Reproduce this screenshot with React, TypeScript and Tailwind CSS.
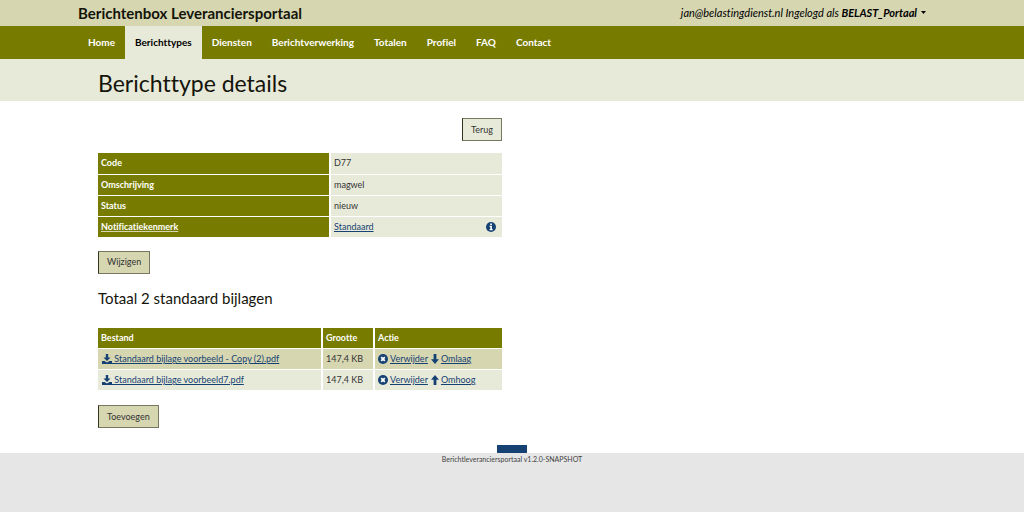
import React from "react";
import clsx from "clsx";

const navItems = [
  "Home",
  "Berichttypes",
  "Diensten",
  "Berichtverwerking",
  "Totalen",
  "Profiel",
  "FAQ",
  "Contact",
];

const details = [
  { label: "Code", value: "D77" },
  { label: "Omschrijving", value: "magwel" },
  { label: "Status", value: "nieuw" },
  { label: "Notificatiekenmerk", value: "Standaard", isLink: true },
];

const attachments = [
  { name: "Standaard bijlage voorbeeld - Copy (2).pdf", size: "147,4 KB", move: "Omlaag" },
  { name: "Standaard bijlage voorbeeld7.pdf", size: "147,4 KB", move: "Omhoog" },
];

function DownloadIcon() {
  return (
    <svg viewBox="0 0 10 10" className="h-2.5 w-2.5 shrink-0" fill="#154273" aria-hidden="true">
      <path d="M3.8 0h2.4v3.4h2.3L5 7 1.5 3.4h2.3z" />
      <path d="M0 7h2.6L5 8.6 7.4 7H10v3H0z" />
    </svg>
  );
}

function RemoveIcon() {
  return (
    <svg viewBox="0 0 10 10" className="h-2.5 w-2.5 shrink-0" aria-hidden="true">
      <circle cx="5" cy="5" r="5" fill="#154273" />
      <path d="M3.2 3.2l3.6 3.6M6.8 3.2L3.2 6.8" stroke="#fff" strokeWidth="1.8" />
    </svg>
  );
}

function InfoIcon() {
  return (
    <svg viewBox="0 0 10 10" className="h-2.5 w-2.5" aria-hidden="true">
      <circle cx="5" cy="5" r="5" fill="#154273" />
      <path d="M4.2 1.5h1.7v1.4H4.2zM3.6 3.8h2.3v3.3h.7v1.2H3.6V7.1h.7V5h-.7z" fill="#fff" />
    </svg>
  );
}

function ArrowIcon({ up }: { up: boolean }) {
  return (
    <svg viewBox="0 0 8 10" className="h-2.5 w-2 shrink-0" fill="#154273" aria-hidden="true">
      {up ? (
        <path d="M4 0L8 4.8H5.4V10H2.6V4.8H0z" />
      ) : (
        <path d="M4 10L0 5.2h2.6V0h2.8v5.2H8z" />
      )}
    </svg>
  );
}

function Button({ children, light }: { children: React.ReactNode; light?: boolean }) {
  return (
    <button
      type="button"
      className={clsx(
        "h-[23px] border border-[#77785f] border-l-[#33341f] px-2 text-[9px] text-[#333]",
        light ? "bg-[#e8ead9]" : "bg-[#d6d6b1]"
      )}
    >
      {children}
    </button>
  );
}

export default function App() {
  return (
    <div className="flex min-h-screen flex-col bg-white font-['Lato','Noto_Sans',sans-serif] text-[9px] leading-4 text-black [font-variant-ligatures:none]">
      <header className="bg-[#d6d6b1]">
        <div className="mx-auto flex h-[26px] max-w-[868px] items-center justify-between pr-5 pb-px">
          <span className="text-[15px] font-bold text-[#14140a]">Berichtenbox Leveranciersportaal</span>
          <button type="button" className="flex items-center gap-1 text-[11px] italic">
            <span>
              jan@belastingdienst.nl Ingelogd als <b>BELAST_Portaal</b>
            </span>
            <svg viewBox="0 0 5 3" className="h-[3px] w-[5px]" aria-hidden="true">
              <path d="M0 0h5L2.5 3z" />
            </svg>
          </button>
        </div>
      </header>

      <nav className="bg-[#777c00]">
        <ul className="mx-auto flex max-w-[868px]">
          {navItems.map((item) => (
            <li key={item}>
              <a
                href="#"
                className={clsx(
                  "block px-2.5 text-[10px] leading-[33px] font-bold",
                  item === "Berichttypes" ? "bg-[#e8ead9] text-black" : "text-white"
                )}
              >
                {item}
              </a>
            </li>
          ))}
        </ul>
      </nav>

      <div className="bg-[#e8ead9]">
        <div className="mx-auto max-w-[868px] px-5">
          <h1 className="pt-[9px] pb-[3px] text-[23px] leading-[30px] text-[#14140a]">Berichttype details</h1>
        </div>
      </div>

      <main className="mx-auto w-full max-w-[868px] px-5">
        <div className="max-w-[404px] pt-[17px]">
          <div className="flex justify-end">
            <Button light>Terug</Button>
          </div>

          <table className="mt-3 w-full table-fixed border-collapse">
            <tbody>
              {details.map((row) => (
                <tr key={row.label} className="h-[21px] border-b border-white">
                  <th
                    scope="row"
                    className="w-[232px] border-r-2 border-white bg-[#777c00] px-[3px] text-left font-bold text-white"
                  >
                    <span className={clsx(row.isLink && "underline decoration-[#d6d6b1]")}>{row.label}</span>
                  </th>
                  <td className="bg-[#e8ead9] pr-1.5 pl-[3px] text-[#333]">
                    {row.isLink ? (
                      <div className="flex items-center justify-between">
                        <a href="#" className="text-[#154273] underline">
                          {row.value}
                        </a>
                        <button type="button" aria-label="Informatie">
                          <InfoIcon />
                        </button>
                      </div>
                    ) : (
                      row.value
                    )}
                  </td>
                </tr>
              ))}
            </tbody>
          </table>

          <div className="mt-[13px] flex">
            <Button>Wijzigen</Button>
          </div>

          <h2 className="mt-3 text-[15px] leading-6 text-[#14140a]">Totaal 2 standaard bijlagen</h2>

          <table className="mt-[18px] w-full table-fixed border-collapse text-left">
            <thead>
              <tr className="h-[21px] border-b border-white bg-[#777c00] text-white">
                <th className="w-[224px] border-r-2 border-white px-[3px]">Bestand</th>
                <th className="w-[52px] border-r-2 border-white px-[3px]">Grootte</th>
                <th className="px-[3px]">Actie</th>
              </tr>
            </thead>
            <tbody>
              {attachments.map((file) => (
                <tr
                  key={file.name}
                  className="h-[21px] border-b border-white odd:bg-[#d6d6b1] even:bg-[#e8ead9]"
                >
                  <td className="border-r-2 border-white px-1">
                    <a href="#" className="flex items-center text-[#154273]">
                      <DownloadIcon />
                      <span className="whitespace-pre underline">{" " + file.name}</span>
                    </a>
                  </td>
                  <td className="border-r-2 border-white px-[3px] whitespace-nowrap text-[#333]">{file.size}</td>
                  <td className="px-[3px]">
                    <div className="flex items-center gap-[3px] text-[#154273]">
                      <a href="#" className="flex items-center gap-0.5">
                        <RemoveIcon />
                        <span className="underline">Verwijder</span>
                      </a>
                      <a href="#" className="flex items-center gap-0.5">
                        <ArrowIcon up={file.move === "Omhoog"} />
                        <span className="underline">{file.move}</span>
                      </a>
                    </div>
                  </td>
                </tr>
              ))}
            </tbody>
          </table>

          <div className="mt-3.5 flex">
            <Button>Toevoegen</Button>
          </div>
        </div>
      </main>

      <div className="mx-auto mt-[17px] h-2 w-[30px] bg-[#154273]" />
      <footer className="flex-1 bg-[#e6e6e6] text-center text-[7px] leading-3 text-[#444]">
        Berichtleveranciersportaal v1.2.0-SNAPSHOT
      </footer>
    </div>
  );
}
